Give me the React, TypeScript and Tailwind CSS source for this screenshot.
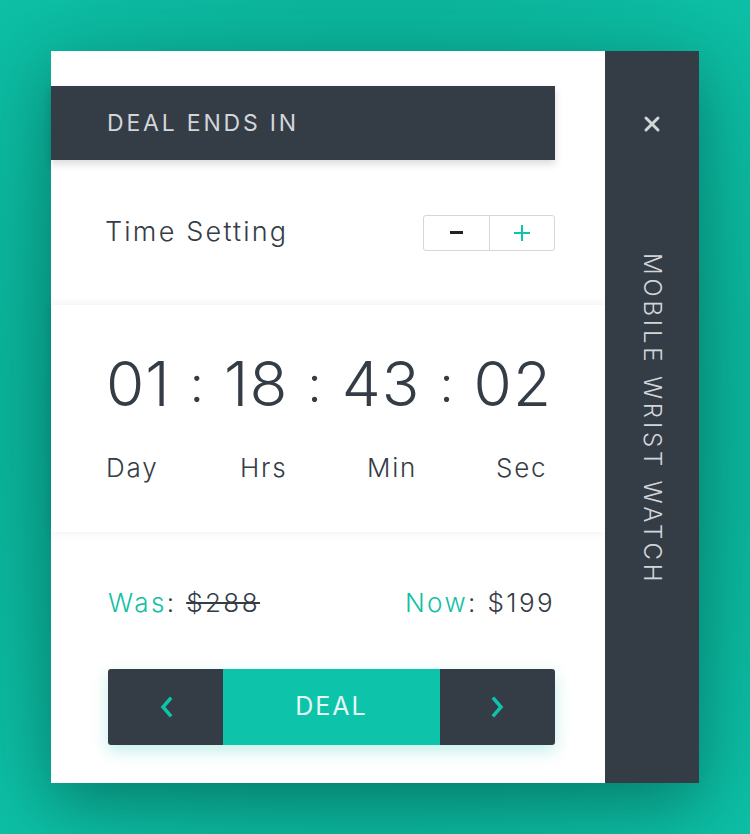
import React from 'react';

const dark = 'bg-[#343c46]';

const Chevron = ({ dir }: { dir: 'left' | 'right' }) => (
    <svg width="16" height="24" viewBox="0 0 16 24" fill="none">
        <path
            d={dir === 'left' ? 'M12 4 L5 12 L12 20' : 'M4 4 L11 12 L4 20'}
            stroke="#0dc4ab"
            strokeWidth="3.5"
            strokeLinecap="square"
        />
    </svg>
);

export default function App() {
    const units = [
        { value: '01', label: 'Day' },
        { value: '18', label: 'Hrs' },
        { value: '43', label: 'Min' },
        { value: '02', label: 'Sec' },
    ];

    return (
        <div className="w-[750px] h-[834px] flex items-center justify-center bg-[radial-gradient(circle_at_center,#08937d_0%,#0aae95_55%,#0dbfa6_100%)] font-['Inter','Noto_Sans',sans-serif]">
            <div className="w-[648px] h-[732px] flex shadow-[0_20px_60px_rgba(0,60,50,0.45)]">
                {/* Main white panel */}
                <div className="w-[554px] bg-white flex flex-col pt-[35px]">
                    <div className={`w-[504px] h-[74px] ${dark} flex items-center pl-[56px] shadow-[0_4px_8px_rgba(0,0,0,0.15)]`}>
                        <span className="text-[#d3d6d9] text-[23px] tracking-[2.8px] font-normal">DEAL ENDS IN</span>
                    </div>

                    <div className="h-[145px] flex items-center justify-between pl-[54px] pr-[50px]">
                        <span className="text-[#343c46] text-[27px] tracking-[2.2px] font-light">Time Setting</span>
                        <div className="flex h-[36px] w-[132px] border border-[#d6d6d6] rounded-[3px]">
                            <button className="flex-1 flex items-center justify-center border-r border-[#d6d6d6]">
                                <span className="block w-[13px] h-[3px] bg-[#222]"></span>
                            </button>
                            <button className="flex-1 flex items-center justify-center relative">
                                <span className="block w-[16px] h-[2px] bg-[#0dc4ab]"></span>
                                <span className="block absolute w-[2px] h-[16px] bg-[#0dc4ab]"></span>
                            </button>
                        </div>
                    </div>

                    {/* Countdown */}
                    <div className="h-[227px] bg-white shadow-[0_0_10px_rgba(0,0,0,0.07)] flex flex-col pl-[55px] pr-[53px] pt-[48px]">
                        <div className="flex items-center justify-between text-[#343c46] text-[62px] font-light leading-none tracking-[1px]">
                            {units.map((u, i) => (
                                <React.Fragment key={u.label}>
                                    <span>{u.value}</span>
                                    {i < units.length - 1 && <span className="text-[50px]">:</span>}
                                </React.Fragment>
                            ))}
                        </div>
                        <div className="flex mt-[33px] text-[#343c46] text-[26px] font-light tracking-[1.8px]">
                            <span className="w-[134px]">Day</span>
                            <span className="w-[127px]">Hrs</span>
                            <span className="w-[129px]">Min</span>
                            <span>Sec</span>
                        </div>
                    </div>

                    {/* Prices */}
                    <div className="flex justify-between items-center pl-[57px] pr-[50px] mt-[51px] text-[26px] font-light tracking-[2.4px] text-[#343c46]">
                        <div>
                            <span className="text-[#12bfa5]">Was</span>: <span className="line-through">$288</span>
                        </div>
                        <div>
                            <span className="text-[#12bfa5]">Now</span>: $199
                        </div>
                    </div>

                    <div className="ml-[57px] mr-[50px] mt-[47px] h-[76px] flex rounded-[3px] overflow-hidden shadow-[0_6px_16px_rgba(13,196,171,0.25)]">
                        <button className={`w-[115px] ${dark} flex items-center justify-center`}>
                            <Chevron dir="left" />
                        </button>
                        <button className="flex-1 bg-[#0dc4ab] flex items-center justify-center text-[#e6f7f4] text-[25px] tracking-[2px] font-normal">
                            DEAL
                        </button>
                        <button className={`w-[115px] ${dark} flex items-center justify-center`}>
                            <Chevron dir="right" />
                        </button>
                    </div>
                </div>

                {/* Sidebar */}
                <div className={`w-[94px] ${dark} flex flex-col items-center pt-[64px]`}>
                    <svg width="18" height="18" viewBox="0 0 18 18">
                        <path d="M3 3 L15 15 M15 3 L3 15" stroke="#d3d6d9" strokeWidth="3" strokeLinecap="round" />
                    </svg>
                    <span className="mt-[120px] [writing-mode:vertical-rl] text-[#d3d6d9] text-[24px] tracking-[3.8px] font-light">
                        MOBILE WRIST WATCH
                    </span>
                </div>
            </div>
        </div>
    );
}
